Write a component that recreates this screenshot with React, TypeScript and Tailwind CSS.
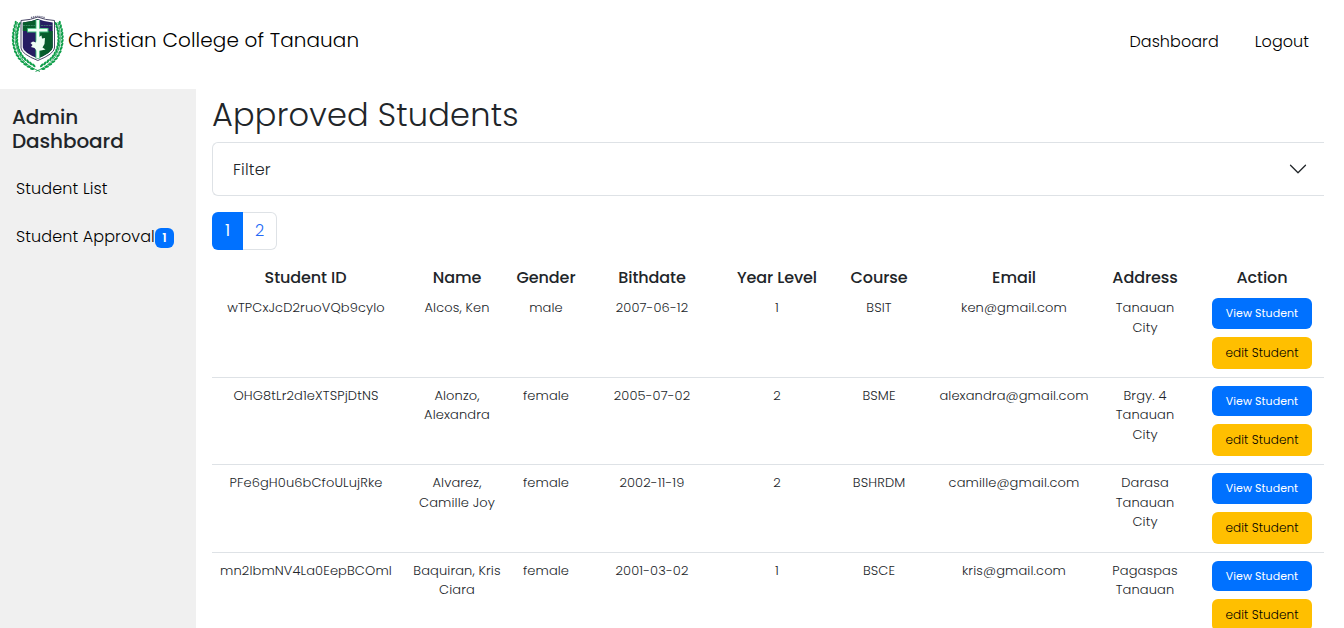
import React from "react";

type Student = {
  id: string;
  name: string[];
  gender: string;
  birthdate: string;
  level: string;
  course: string;
  email: string;
  address: string[];
};

const students: Student[] = [
  { id: "wTPCxJcD2ruoVQb9cylo", name: ["Alcos, Ken"], gender: "male", birthdate: "2007-06-12", level: "1", course: "BSIT", email: "ken@gmail.com", address: ["Tanauan", "City"] },
  { id: "OHG8tLr2d1eXTSPjDtNS", name: ["Alonzo,", "Alexandra"], gender: "female", birthdate: "2005-07-02", level: "2", course: "BSME", email: "alexandra@gmail.com", address: ["Brgy. 4", "Tanauan", "City"] },
  { id: "PFe6gH0u6bCfoULujRke", name: ["Alvarez,", "Camille Joy"], gender: "female", birthdate: "2002-11-19", level: "2", course: "BSHRDM", email: "camille@gmail.com", address: ["Darasa", "Tanauan", "City"] },
  { id: "mn2IbmNV4La0EepBCOmI", name: ["Baquiran, Kris", "Ciara"], gender: "female", birthdate: "2001-03-02", level: "1", course: "BSCE", email: "kris@gmail.com", address: ["Pagaspas", "Tanauan"] },
];

/* x, y and direction of each leaf pair along the branch */
const leaves = [
  [6.4, 10, -72], [5.4, 13.5, -75], [4.6, 17, -80], [4.2, 20.5, -85], [4, 24, -90], [4.1, 27.5, -93], [4.5, 31, -98], [5.4, 34.5, -104],
  [6.6, 38, -112], [8.4, 41.2, -120], [10.5, 44.2, -127], [13, 46.8, -135], [16, 49.2, -142], [19.2, 51.4, -149], [22.5, 53.4, -155],
];

function Laurel() {
  return (
    <g>
      <path d="M6.6 8C0.8 28 4.5 48 29 57.5" fill="none" stroke="#1d9c52" strokeWidth="0.9" />
      {leaves.map(([x, y, r]) => (
        <g key={y} transform={`translate(${x} ${y}) rotate(${r})`} fill="#0f9f4a">
          <ellipse cx="1.2" cy="-1.6" rx="2.2" ry="1.1" transform="rotate(-20)" />
          <ellipse cx="1.2" cy="1.6" rx="2.2" ry="1.1" transform="rotate(20)" />
        </g>
      ))}
    </g>
  );
}

function Crest() {
  return (
    <svg width="54" height="60" viewBox="0 0 54 60" className="shrink-0">
      <Laurel />
      <g transform="translate(53.5 0) scale(-1 1)"><Laurel /></g>
      <path d="M10 6.5Q20 6 26.8 3Q34 6 43.5 6.5V34Q43 40 26.8 46.5Q10.5 40 10 34Z" fill="#fff" stroke="#4b4868" strokeWidth="1" />
      <path d="M11.8 8.5Q20 8 26.8 5Q34 8 41.7 8.5V33.5Q41 38.5 26.8 44.5Q12.5 38.5 11.8 33.5Z" fill="#261c62" />
      <path d="M11.8 8.5Q20 8 26.8 5V17H11.8ZM26.8 17H41.7V33.5Q41 38.5 26.8 44.5Z" fill="#075c2b" />
      <path d="M12 11.5H24M30 11.5H41.5" stroke="#4c8f78" strokeWidth="0.7" strokeDasharray="2 .6" />
      <path d="M26.8 6V44.5M16 16.2H37.5" stroke="#36b574" strokeWidth="4.6" />
      <path d="M26.8 6V44M17 16.2H36.5" stroke="#f1fff5" strokeWidth="2.8" />
      <path d="M19.5 29L22 27.5L25 28.5L27 23.5L30.5 21.5L31 24.5L34 24L33.5 30L31.5 33.5L34.5 35.5L30 36.5L26 37L23.5 34L20 33L21.5 31Z" fill="#effff4" />
      <path d="M20 3.8Q27 1.2 34 3.8" fill="none" stroke="#73728b" strokeWidth="1.6" strokeDasharray="1.3 .8" />
    </svg>
  );
}

function Lines({ items }: { items: string[] }) {
  return <>{items.map((line) => <div key={line}>{line}</div>)}</>;
}

export default function App() {
  return (
    <div className="h-[628px] w-[1344px] overflow-hidden bg-white font-['Poppins','Inter',sans-serif] text-base font-light text-[#212529] [font-feature-settings:'cv11']">
      <header className="flex h-[89px] items-start justify-between pr-[35px] pl-[11px] text-black">
        <div className="flex items-start pt-[14px]">
          <Crest />
          <span className="ml-[3px] pt-[11px] text-xl leading-[30px] tracking-[0.1px] whitespace-nowrap">Christian College of Tanauan</span>
        </div>
        <nav className="flex gap-9 pt-[30px] leading-6 tracking-[0.05px]">
          <a>Dashboard</a>
          <a>Logout</a>
        </nav>
      </header>
      <div className="flex">
        <aside className="h-[539px] w-[196px] shrink-0 bg-[#f0f0f0] pt-4">
          <h2 className="pl-3 text-xl leading-6 font-medium tracking-[-0.1px]">
            <span className="block">Admin</span>
            <span className="block">Dashboard</span>
          </h2>
          <div className="mt-6 pl-4 leading-6 tracking-[0.12px] text-black">Student List</div>
          <div className="mt-6 flex pl-4 leading-6 tracking-[0.1px] text-black">
            <span className="w-[139px] whitespace-nowrap">Student Approval</span>
            <span className="mt-[3px] h-5 w-[19px] rounded-md bg-[#0071ff] text-center text-xs leading-5 font-semibold tracking-normal text-white">1</span>
          </div>
        </aside>
        <main className="w-[1128px] shrink-0 pl-4">
          <h1 className="pt-[7px] text-[32px] leading-[38px] tracking-[0.2px]">Approved Students</h1>
          <div className="mt-2 flex h-[54px] items-center justify-between rounded-l-md border border-r-0 border-[#dee2e6] pr-4 pl-5">
            <span className="pt-0.5 tracking-[0.2px]">Filter</span>
            <svg width="20" height="20" viewBox="0 0 16 16" fill="none" stroke="#212529" strokeLinecap="round" strokeLinejoin="round"><path d="M2 5l6 6 6-6" /></svg>
          </div>
          <div className="mt-4 flex h-[38px] w-[65px] leading-[36px]">
            <span className="w-[31px] rounded-l-md bg-[#0071ff] pt-px text-center font-normal text-white">1</span>
            <span className="flex-1 rounded-r-md border border-l-0 border-[#dee2e6] text-center text-[#2469f6]">2</span>
          </div>
          <table className="mt-[11.6px] w-[1112px] table-fixed border-collapse text-center">
            <colgroup>
              <col className="w-[194px]" /><col className="w-[102px]" /><col className="w-[76px]" /><col className="w-[136px]" /><col className="w-[114px]" /><col className="w-[90px]" /><col className="w-[180px]" /><col className="w-[82px]" /><col className="w-[138px]" />
            </colgroup>
            <thead>
              <tr className="h-7 leading-6 tracking-[-0.1px] whitespace-nowrap [&>th]:pt-1 [&>th]:font-medium">
                <th className="pr-[7px]">Student ID</th><th>Name</th><th>Gender</th><th>Bithdate</th><th>Year Level</th><th>Course</th><th>Email</th><th>Address</th><th className="pl-[14px]">Action</th>
              </tr>
            </thead>
            <tbody>
              {students.map((s, i) => (
                <tr key={s.id} className={"h-[87.5px] border-b border-[#dee2e6] align-top text-[13px] leading-[19.5px] tracking-[0.12px] whitespace-nowrap " + (i === 0 ? "[&>td]:pt-[8.5px]" : "[&>td]:pt-2")}>
                  <td className="pr-[7px] pl-px">{s.id}</td>
                  <td><Lines items={s.name} /></td>
                  <td>{s.gender}</td>
                  <td>{s.birthdate}</td>
                  <td>{s.level}</td>
                  <td>{s.course}</td>
                  <td>{s.email}</td>
                  <td><Lines items={s.address} /></td>
                  <td className="pl-[14px]">
                    <button className="mx-auto block h-[30.5px] w-[100px] rounded-md bg-[#0071ff] text-[11px] leading-[30px] font-normal tracking-[0.05px] text-white">View Student</button>
                    <button className="mx-auto mt-2 block h-8 w-[100px] rounded-md bg-[#ffbf00] text-[12px] leading-8 tracking-[0.1px] text-black">edit Student</button>
                  </td>
                </tr>
              ))}
            </tbody>
          </table>
        </main>
      </div>
    </div>
  );
}
